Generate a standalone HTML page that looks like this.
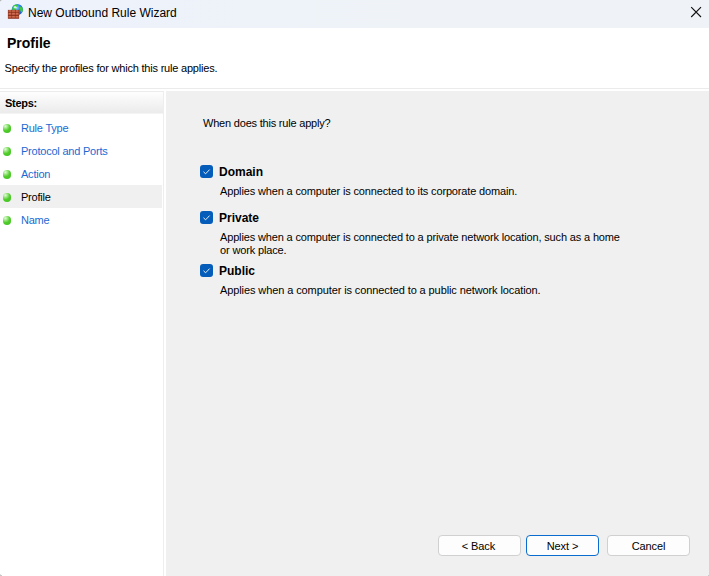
<!DOCTYPE html>
<html><head><meta charset="utf-8">
<style>
*{margin:0;padding:0;box-sizing:border-box}
html,body{width:709px;height:576px;overflow:hidden;background:#fff;font-family:"Liberation Sans",sans-serif;font-size:11px;color:#000}
.abs{position:absolute;white-space:nowrap}
#title{position:absolute;left:0;top:0;width:709px;height:28px;background:linear-gradient(90deg,#edf2fc,#eef3f9 40%,#eff3f8 60%,#eff2f7)}
#title .t{left:28px;top:5px;font-size:12px;line-height:16px;color:#000}
#hdr{position:absolute;left:0;top:28px;width:709px;height:60px;background:#fff}
#sep{position:absolute;left:0;top:88px;width:709px;height:1px;background:#ebebeb}
#steps{position:absolute;left:0;top:91px;width:164px;height:485px;background:#fff;border-right:1px solid #eeeeee}
#steps .h{position:absolute;left:0;top:0;width:163px;height:23px;background:linear-gradient(#fefefe,#ebebeb);border-top:1px solid #ececec;border-bottom:1px solid #f4f4f4}
#main{position:absolute;left:166px;top:91px;width:543px;height:485px;background:#f0f0f0}
.sn{letter-spacing:-0.15px}
.bl{font-size:12px;font-weight:bold;line-height:14px}
.dot{position:absolute;left:2.7px;width:8.8px;height:9px;border-radius:50%;background:radial-gradient(circle at 30% 25%,#e6fbe0 0,#a0e888 22%,#52cc2c 50%,#3cc020 100%)}
.link{color:#1a6ad4}
#steps .sn{letter-spacing:-0.22px}
.cb{position:absolute;left:200px;width:13px;height:13px;border-radius:3px;background:#055db9}
.btn{position:absolute;top:535px;height:21px;border:1px solid #d0d0d0;border-radius:4px;background:#fdfdfd;text-align:center;line-height:20px;font-size:11px;letter-spacing:-0.1px}
</style></head><body>
<div id="title">
  <svg style="position:absolute;left:7px;top:3px" width="18" height="18" viewBox="0 0 18 18">
    <defs>
      <radialGradient id="g1" cx="0.4" cy="0.35" r="0.75"><stop offset="0" stop-color="#9fd8ff"/><stop offset="0.45" stop-color="#2a86ee"/><stop offset="1" stop-color="#1a4fc0"/></radialGradient>
      <linearGradient id="b1" x1="0" y1="0" x2="0" y2="1"><stop offset="0" stop-color="#d9775a"/><stop offset="1" stop-color="#a8432a"/></linearGradient>
    </defs>
    <circle cx="10.3" cy="6.5" r="5.6" fill="url(#g1)"/>
    <path d="M6.2 3.2C7.5 1.6 9.6 1.2 10.8 1.6L10.2 3.4L8.6 4.6L9.4 6.6L7.6 7.6L5.4 6.8C5.2 5.4 5.5 4.1 6.2 3.2Z" fill="#3ccf2e"/>
    <path d="M13.2 3.6L15.2 4.6C15.8 5.8 15.9 7.2 15.6 8.4L14.2 9.4L13.4 7.6L12.6 5.4Z" fill="#3ccf2e"/>
    <circle cx="8.2" cy="4.2" r="1.3" fill="#e8fff0" opacity="0.85"/>
    <rect x="0.9" y="6.9" width="11.2" height="8.8" fill="#7e2a18"/>
    <g fill="url(#b1)">
      <rect x="1.3" y="7.3" width="3.2" height="2.4" rx="0.6"/><rect x="4.9" y="7.3" width="3.2" height="2.4" rx="0.6"/><rect x="8.5" y="7.3" width="3.2" height="2.4" rx="0.6"/>
      <rect x="1.3" y="10.1" width="3.2" height="2.4" rx="0.6"/><rect x="4.9" y="10.1" width="3.2" height="2.4" rx="0.6"/><rect x="8.5" y="10.1" width="3.2" height="2.4" rx="0.6"/>
      <rect x="1.3" y="12.9" width="3.2" height="2.4" rx="0.6"/><rect x="4.9" y="12.9" width="3.2" height="2.4" rx="0.6"/><rect x="8.5" y="12.9" width="3.2" height="2.4" rx="0.6"/>
    </g>
  </svg>
  <div class="abs t">New Outbound Rule Wizard</div>
  <svg style="position:absolute;left:690px;top:6px" width="12" height="12" viewBox="0 0 12 12">
    <path d="M1.2 1.2L11 11M11 1.2L1.2 11" stroke="#111" stroke-width="1.15"/>
  </svg>
</div>
<div id="hdr">
  <div class="abs" style="left:7px;top:7px;font-size:14px;font-weight:bold;line-height:16px">Profile</div>
  <div class="abs sn" style="left:4.6px;top:34px;letter-spacing:-0.2px;line-height:13px">Specify the profiles for which this rule applies.</div>
</div>
<div id="sep"></div>
<div id="steps">
  <div class="h"></div>
  <div class="abs" style="left:5px;top:6px;font-weight:bold;line-height:13px;letter-spacing:-0.3px">Steps:</div>
  <div style="position:absolute;left:0;top:94px;width:162px;height:23px;background:#f0f0f0"></div>
  <div class="dot" style="top:32.9px"></div><div class="abs link sn" style="left:21px;top:31px;line-height:13px">Rule Type</div>
  <div class="dot" style="top:55.9px"></div><div class="abs link sn" style="left:21px;top:54px;line-height:13px">Protocol and Ports</div>
  <div class="dot" style="top:78.9px"></div><div class="abs link sn" style="left:21px;top:77px;line-height:13px">Action</div>
  <div class="dot" style="top:101.9px"></div><div class="abs sn" style="left:21px;top:100px;line-height:13px">Profile</div>
  <div class="dot" style="top:124.9px"></div><div class="abs link sn" style="left:21px;top:123px;line-height:13px">Name</div>
</div>
<div id="main"></div>
<div class="abs sn" style="left:203px;top:117px;line-height:13px;letter-spacing:-0.2px">When does this rule apply?</div>

<div class="cb" style="top:165px"><svg width="13" height="13" viewBox="0 0 13 13"><path d="M3.5 6.8L5.6 8.8L9.6 4.6" stroke="#fff" stroke-width="0.9" fill="none"/></svg></div>
<div class="abs bl" style="left:219px;top:165px">Domain</div>
<div class="abs sn" style="left:220px;top:185px;line-height:13px">Applies when a computer is connected to its corporate domain.</div>

<div class="cb" style="top:211px"><svg width="13" height="13" viewBox="0 0 13 13"><path d="M3.5 6.8L5.6 8.8L9.6 4.6" stroke="#fff" stroke-width="0.9" fill="none"/></svg></div>
<div class="abs bl" style="left:219px;top:211px">Private</div>
<div class="abs sn" style="left:220px;top:231px;line-height:13px">Applies when a computer is connected to a private network location, such as a home<br>or work place.</div>

<div class="cb" style="top:264px"><svg width="13" height="13" viewBox="0 0 13 13"><path d="M3.5 6.8L5.6 8.8L9.6 4.6" stroke="#fff" stroke-width="0.9" fill="none"/></svg></div>
<div class="abs bl" style="left:219px;top:264px">Public</div>
<div class="abs sn" style="left:220px;top:284px;line-height:13px;letter-spacing:-0.1px">Applies when a computer is connected to a public network location.</div>

<div class="btn" style="left:438px;width:83px;padding-right:2px">&lt; Back</div>
<div class="btn" style="left:526px;width:73px;border-color:#0a6ccf">Next &gt;</div>
<div class="btn" style="left:607px;width:83px">Cancel</div>
<div style="position:absolute;left:0;top:0;width:1px;height:1px;background:#b8b8b8"></div>
<div style="position:absolute;left:1px;top:0;width:1px;height:1px;background:#dcdfe4"></div>
<div style="position:absolute;left:0;top:1px;width:1px;height:1px;background:#e2e6ec"></div>
<div style="position:absolute;left:0;top:574px;width:1px;height:1px;background:#e0e0e0"></div>
<div style="position:absolute;left:0;top:575px;width:2px;height:1px;background:#c8c8c8"></div>
<div style="position:absolute;left:708px;top:575px;width:1px;height:1px;background:#c8c8c8"></div>
</body></html>
